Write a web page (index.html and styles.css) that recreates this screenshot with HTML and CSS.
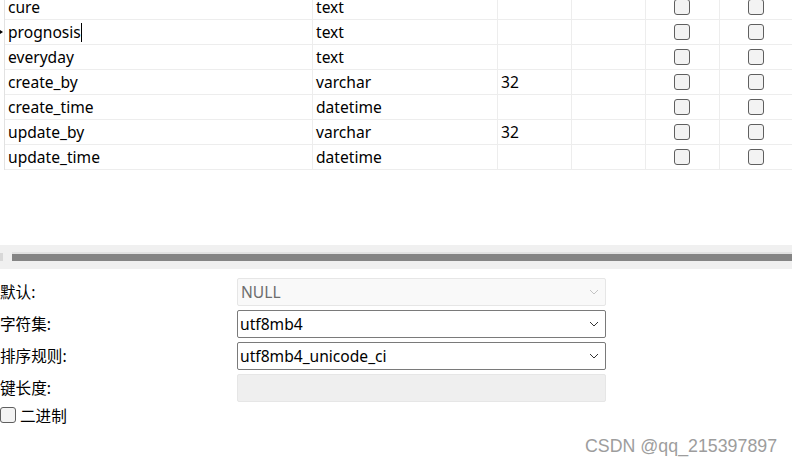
FILE: index.html
```html
<!DOCTYPE html>
<html>
<head>
<meta charset="utf-8">
<link rel="stylesheet" href="styles.css">
</head>
<body>
<div class="grid">
  <div class="row"><div class="c ind"></div><div class="c">cure</div><div class="c">text</div><div class="c"></div><div class="c"></div><div class="c chk"><span class="cb"></span></div><div class="c chk"><span class="cb"></span></div></div>
  <div class="row"><div class="c ind"><span class="marker"></span></div><div class="c">prognosis<span class="caret"></span></div><div class="c">text</div><div class="c"></div><div class="c"></div><div class="c chk"><span class="cb"></span></div><div class="c chk"><span class="cb"></span></div></div>
  <div class="row"><div class="c ind"></div><div class="c">everyday</div><div class="c">text</div><div class="c"></div><div class="c"></div><div class="c chk"><span class="cb"></span></div><div class="c chk"><span class="cb"></span></div></div>
  <div class="row"><div class="c ind"></div><div class="c">create_by</div><div class="c">varchar</div><div class="c">32</div><div class="c"></div><div class="c chk"><span class="cb"></span></div><div class="c chk"><span class="cb"></span></div></div>
  <div class="row"><div class="c ind"></div><div class="c">create_time</div><div class="c">datetime</div><div class="c"></div><div class="c"></div><div class="c chk"><span class="cb"></span></div><div class="c chk"><span class="cb"></span></div></div>
  <div class="row"><div class="c ind"></div><div class="c">update_by</div><div class="c">varchar</div><div class="c">32</div><div class="c"></div><div class="c chk"><span class="cb"></span></div><div class="c chk"><span class="cb"></span></div></div>
  <div class="row"><div class="c ind"></div><div class="c">update_time</div><div class="c">datetime</div><div class="c"></div><div class="c"></div><div class="c chk"><span class="cb"></span></div><div class="c chk"><span class="cb"></span></div></div>
</div>

<div class="hscroll">
  <span class="hs-arrow"></span>
  <span class="hs-thumb"></span>
</div>

<div class="form">
  <div class="label">默认:</div>
  <div class="field disabled"><span>NULL</span><svg class="chev" width="10" height="6" viewBox="0 0 10 6"><polyline points="1,1 5,5 9,1" fill="none" stroke="#c4c4c4" stroke-width="1"/></svg></div>
  <div class="label">字符集:</div>
  <div class="field"><span>utf8mb4</span><svg class="chev" width="10" height="6" viewBox="0 0 10 6"><polyline points="1,1 5,5 9,1" fill="none" stroke="#333" stroke-width="1"/></svg></div>
  <div class="label">排序规则:</div>
  <div class="field"><span>utf8mb4_unicode_ci</span><svg class="chev" width="10" height="6" viewBox="0 0 10 6"><polyline points="1,1 5,5 9,1" fill="none" stroke="#333" stroke-width="1"/></svg></div>
  <div class="label">键长度:</div>
  <div class="field empty"></div>
</div>
<div class="binary"><span class="cb"></span><span>二进制</span></div>

<div class="watermark">CSDN @qq_215397897</div>
</body>
</html>
```

FILE: styles.css
```css
html, body {
  margin: 0;
  padding: 0;
  background: #ffffff;
}
body {
  width: 792px;
  height: 464px;
  overflow: hidden;
  position: relative;
  font-family: "Noto Sans", "Noto Sans CJK SC", sans-serif;
  font-size: 15.6px;
  color: #000;
}
.grid {
  margin-top: -5px;
}
.row {
  display: grid;
  grid-template-columns: 5px 308px 185px 74px 74px 74px 1fr;
  height: 25px;
}
.c {
  box-sizing: border-box;
  border-right: 1px solid #ededed;
  border-bottom: 1px solid #ededed;
  padding-left: 3px;
  line-height: 24px;
  white-space: nowrap;
  position: relative;
}
.c.ind {
  border-bottom: none;
  border-right: 1px solid #e2e2e2;
  padding: 0;
}
.marker {
  position: absolute;
  left: 0;
  top: 10px;
  width: 0;
  height: 0;
  border-top: 2px solid transparent;
  border-bottom: 2px solid transparent;
  border-left: 3px solid #000;
}
.caret {
  display: inline-block;
  width: 1px;
  height: 19px;
  background: #000;
  vertical-align: -4px;
}
.chk {
  display: flex;
  justify-content: flex-start;
  align-items: center;
  padding: 0 0 0 28px;
}
.row .chk:last-child {
  border-right: none;
}
.cb {
  display: inline-block;
  box-sizing: border-box;
  width: 16px;
  height: 16px;
  border: 1px solid #5f5f5f;
  border-radius: 3px;
  background: #f3f3f3;
}
.hscroll {
  margin-top: 75px;
  height: 24px;
  background: #f0f0f0;
  position: relative;
  display: flex;
  align-items: center;
}
.hs-arrow {
  width: 3px;
  height: 8px;
  background: #d8d8d8;
}
.hs-thumb {
  margin-left: 9px;
  flex: 1;
  height: 7px;
  background: #858585;
  border-top: 2px solid #e2e2e2;
  margin-bottom: 2px;
}
.form {
  margin-top: 9px;
  display: grid;
  grid-template-columns: 237px 369px;
  grid-auto-rows: 28px;
  row-gap: 4px;
}
.label {
  display: flex;
  align-items: center;
  padding-bottom: 1px;
}
.field {
  box-sizing: border-box;
  border: 1px solid #7a7a7a;
  border-radius: 2px;
  background: #fff;
  display: flex;
  align-items: center;
  justify-content: space-between;
  padding: 0 6px 0 2px;
}
.field.disabled {
  border-color: #e6e6e6;
  background: #f9f9f9;
  color: #6d6d6d;
}
.field.disabled span {
  padding-left: 1px;
}
.field.empty {
  border-color: #e6e6e6;
  background: #efefef;
}
.chev {
  display: block;
}
.binary {
  margin-top: 5px;
  display: flex;
  align-items: center;
  gap: 4px;
  height: 16px;
}
.watermark {
  position: absolute;
  left: 585px;
  top: 434px;
  font-family: "Liberation Sans", Arial, sans-serif;
  font-size: 17.8px;
  color: #9d9d9d;
  line-height: 24px;
}
```
